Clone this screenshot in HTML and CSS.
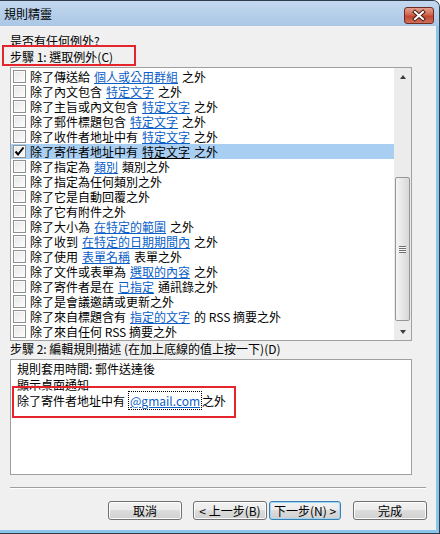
FILE: index.html
```html
<!DOCTYPE html>
<html lang="zh-Hant">
<head>
    <meta charset="UTF-8">
    <title>規則精靈</title>
    <link rel="stylesheet" href="styles.css">
</head>
<body>
    <div class="window">
        <div class="titlebar">
            <span class="title">規則精靈</span>
            <div class="close">
                <svg width="28" height="15" viewBox="0 0 28 15">
                    <path d="M10 4 L18 11 M18 4 L10 11" stroke="#4b1d16" stroke-width="4" stroke-linecap="square"/>
                    <path d="M10 4 L18 11 M18 4 L10 11" stroke="#fff" stroke-width="2" stroke-linecap="square"/>
                </svg>
            </div>
        </div>

        <div class="client">
            <div class="label">是否有任何例外?</div>
            <div class="label step1">步驟 1: 選取例外(C)</div>

            <div class="list">
                <div class="items">
                    <div class="row"><span class="check"></span>除了傳送給<span class="link">個人或公用群組</span>之外</div>
                    <div class="row"><span class="check"></span>除了內文包含<span class="link">特定文字</span>之外</div>
                    <div class="row"><span class="check"></span>除了主旨或內文包含<span class="link">特定文字</span>之外</div>
                    <div class="row"><span class="check"></span>除了郵件標題包含<span class="link">特定文字</span>之外</div>
                    <div class="row"><span class="check"></span>除了收件者地址中有<span class="link">特定文字</span>之外</div>
                    <div class="row selected"><span class="check"><svg width="11" height="11" viewBox="0 0 11 11"><path d="M1.5 5.5 L4 8.5 L9.5 1.5" fill="none" stroke="#000" stroke-width="2"/></svg></span>除了寄件者地址中有<span class="link">特定文字</span>之外</div>
                    <div class="row"><span class="check"></span>除了指定為<span class="link">類別</span>類別之外</div>
                    <div class="row"><span class="check"></span>除了指定為任何類別之外</div>
                    <div class="row"><span class="check"></span>除了它是自動回覆之外</div>
                    <div class="row"><span class="check"></span>除了它有附件之外</div>
                    <div class="row"><span class="check"></span>除了大小為<span class="link">在特定的範圍</span>之外</div>
                    <div class="row"><span class="check"></span>除了收到<span class="link">在特定的日期期間內</span>之外</div>
                    <div class="row"><span class="check"></span>除了使用<span class="link">表單名稱</span>表單之外</div>
                    <div class="row"><span class="check"></span>除了文件或表單為<span class="link">選取的內容</span>之外</div>
                    <div class="row"><span class="check"></span>除了寄件者是在<span class="link">已指定</span>通訊錄之外</div>
                    <div class="row"><span class="check"></span>除了是會議邀請或更新之外</div>
                    <div class="row"><span class="check"></span>除了來自標題含有<span class="link">指定的文字</span>的 RSS 摘要之外</div>
                    <div class="row"><span class="check"></span>除了來自任何 RSS 摘要之外</div>
                </div>
                <div class="scrollbar">
                    <div class="arrow"><span class="tri-up"></span></div>
                    <div class="track">
                        <div class="thumb"><span class="grip"></span></div>
                    </div>
                    <div class="arrow"><span class="tri-down"></span></div>
                </div>
            </div>

            <div class="label step2">步驟 2: 編輯規則描述 (在加上底線的值上按一下)(D)</div>

            <div class="desc">
                <div>規則套用時間: 郵件送達後</div>
                <div>顯示桌面通知</div>
                <div>除了寄件者地址中有<span class="focus"><span class="link">@gmail.com</span></span>之外</div>
            </div>

            <div class="separator"></div>

            <div class="buttons">
                <button class="btn">取消</button>
                <button class="btn back">&lt; 上一步(B)</button>
                <button class="btn next">下一步(N) &gt;</button>
                <button class="btn finish">完成</button>
            </div>

            <!-- annotation boxes -->
            <div class="mark mark1"></div>
            <div class="mark mark2"></div>
        </div>
    </div>
</body>
</html>
```

FILE: styles.css
```css
body {
    margin: 0;
    font-family: "Noto Sans CJK TC", "Liberation Sans", sans-serif;
    font-size: 12px;
    color: #000;
}
.window {
    width: 440px;
    height: 534px;
    box-sizing: border-box;
    border: 1px solid #2f3d4b;
    border-left: none;
    border-top-right-radius: 7px;
    background: #8cc5ea;
    overflow: hidden;
}
.titlebar {
    height: 25px;
    display: flex;
    align-items: center;
    justify-content: space-between;
    padding-left: 4px;
    background: linear-gradient(#c3d8ee, #aac7e6);
}
.title {
    line-height: 16px;
    margin-top: 1px;
}
.close {
    width: 28px;
    height: 15px;
    margin-right: 5px;
    margin-top: 3px;
    border: 1px solid #6d2b20;
    border-radius: 3px;
    background: linear-gradient(#e3a08f, #d0654f 45%, #c04630 55%, #d0705a);
}
.close svg {
    display: block;
}
.client {
    position: relative;
    width: 436px;
    height: 504px;
    box-sizing: border-box;
    padding: 7px 0 0 10px;
    background: #f0f0f0;
}
.label {
    line-height: 16px;
    white-space: nowrap;
}
.step1, .step2 {
    margin-bottom: 2px;
}
.list {
    display: flex;
    width: 402px;
    height: 274px;
    box-sizing: border-box;
    border: 1px solid #a0a0a0;
    background: #fff;
}
.items {
    flex: 1;
    padding-top: 1px;
}
.row {
    display: flex;
    align-items: center;
    height: 15px;
    line-height: 15px;
    padding-left: 2px;
    white-space: nowrap;
}
.row.selected {
    background: #a8cef2;
}
.row.selected .link {
    color: #000;
}
.check {
    width: 13px;
    height: 13px;
    box-sizing: border-box;
    margin-right: 4px;
    border: 1px solid #8e8f8f;
    background: linear-gradient(135deg, #e6e6e6, #fdfdfd);
    box-shadow: inset 0 0 0 1px #fafafa;
    display: flex;
    align-items: center;
    justify-content: center;
}
.check svg {
    display: block;
}
.link {
    color: #0a5ec8;
    text-decoration: underline;
    margin: 0 4px;
}
.scrollbar {
    width: 17px;
    display: flex;
    flex-direction: column;
    background: #ececec;
}
.arrow {
    height: 17px;
    display: flex;
    align-items: center;
    justify-content: center;
}
.tri-up {
    border-left: 3.5px solid transparent;
    border-right: 3.5px solid transparent;
    border-bottom: 4px solid #3c3c3c;
}
.tri-down {
    border-left: 3.5px solid transparent;
    border-right: 3.5px solid transparent;
    border-top: 4px solid #3c3c3c;
}
.track {
    flex: 1;
}
.thumb {
    margin: 92px 1px 0;
    height: 144px;
    box-sizing: border-box;
    border: 1px solid #979797;
    border-radius: 2px;
    background: linear-gradient(to right, #f4f4f4, #e6e6e6 50%, #d8d8d8);
    display: flex;
    align-items: center;
    justify-content: center;
}
.grip {
    width: 7px;
    height: 7px;
    background: repeating-linear-gradient(#6f6f6f 0 1px, #f8f8f8 1px 2px);
}
.desc {
    width: 402px;
    height: 116px;
    box-sizing: border-box;
    border: 1px solid #a0a0a0;
    background: #fff;
    padding: 1px 6px;
    line-height: 16px;
}
.focus {
    margin-left: 3px;
    border: 1px dotted #000;
}
.focus .link {
    margin: 0 1px;
}
.separator {
    width: 416px;
    margin-top: 12px;
    border-top: 1px solid #a0a0a0;
    border-bottom: 1px solid #fff;
}
.buttons {
    display: flex;
    margin-top: 12px;
    padding-left: 98px;
}
.btn {
    width: 74px;
    height: 19px;
    padding: 0;
    font-family: inherit;
    font-size: 12px;
    line-height: 16px;
    border: 1px solid #707070;
    border-radius: 3px;
    background: linear-gradient(#f2f2f2, #ebebeb 50%, #dddddd 50%, #cfcfcf);
    box-shadow: inset 0 0 0 1px #fcfcfc;
    color: #000;
}
.back {
    margin-left: 11px;
}
.next {
    width: 72px;
    margin-left: 2px;
    border-color: #3c7fb1;
    box-shadow: inset 0 0 0 1px #9fd7f5;
}
.finish {
    margin-left: 12px;
}
.mark {
    position: absolute;
    border: 2px solid #e4262c;
    box-sizing: border-box;
}
.mark1 {
    left: 2px;
    top: 19px;
    width: 134px;
    height: 21px;
}
.mark2 {
    left: 12px;
    top: 360px;
    width: 224px;
    height: 32px;
}
```
